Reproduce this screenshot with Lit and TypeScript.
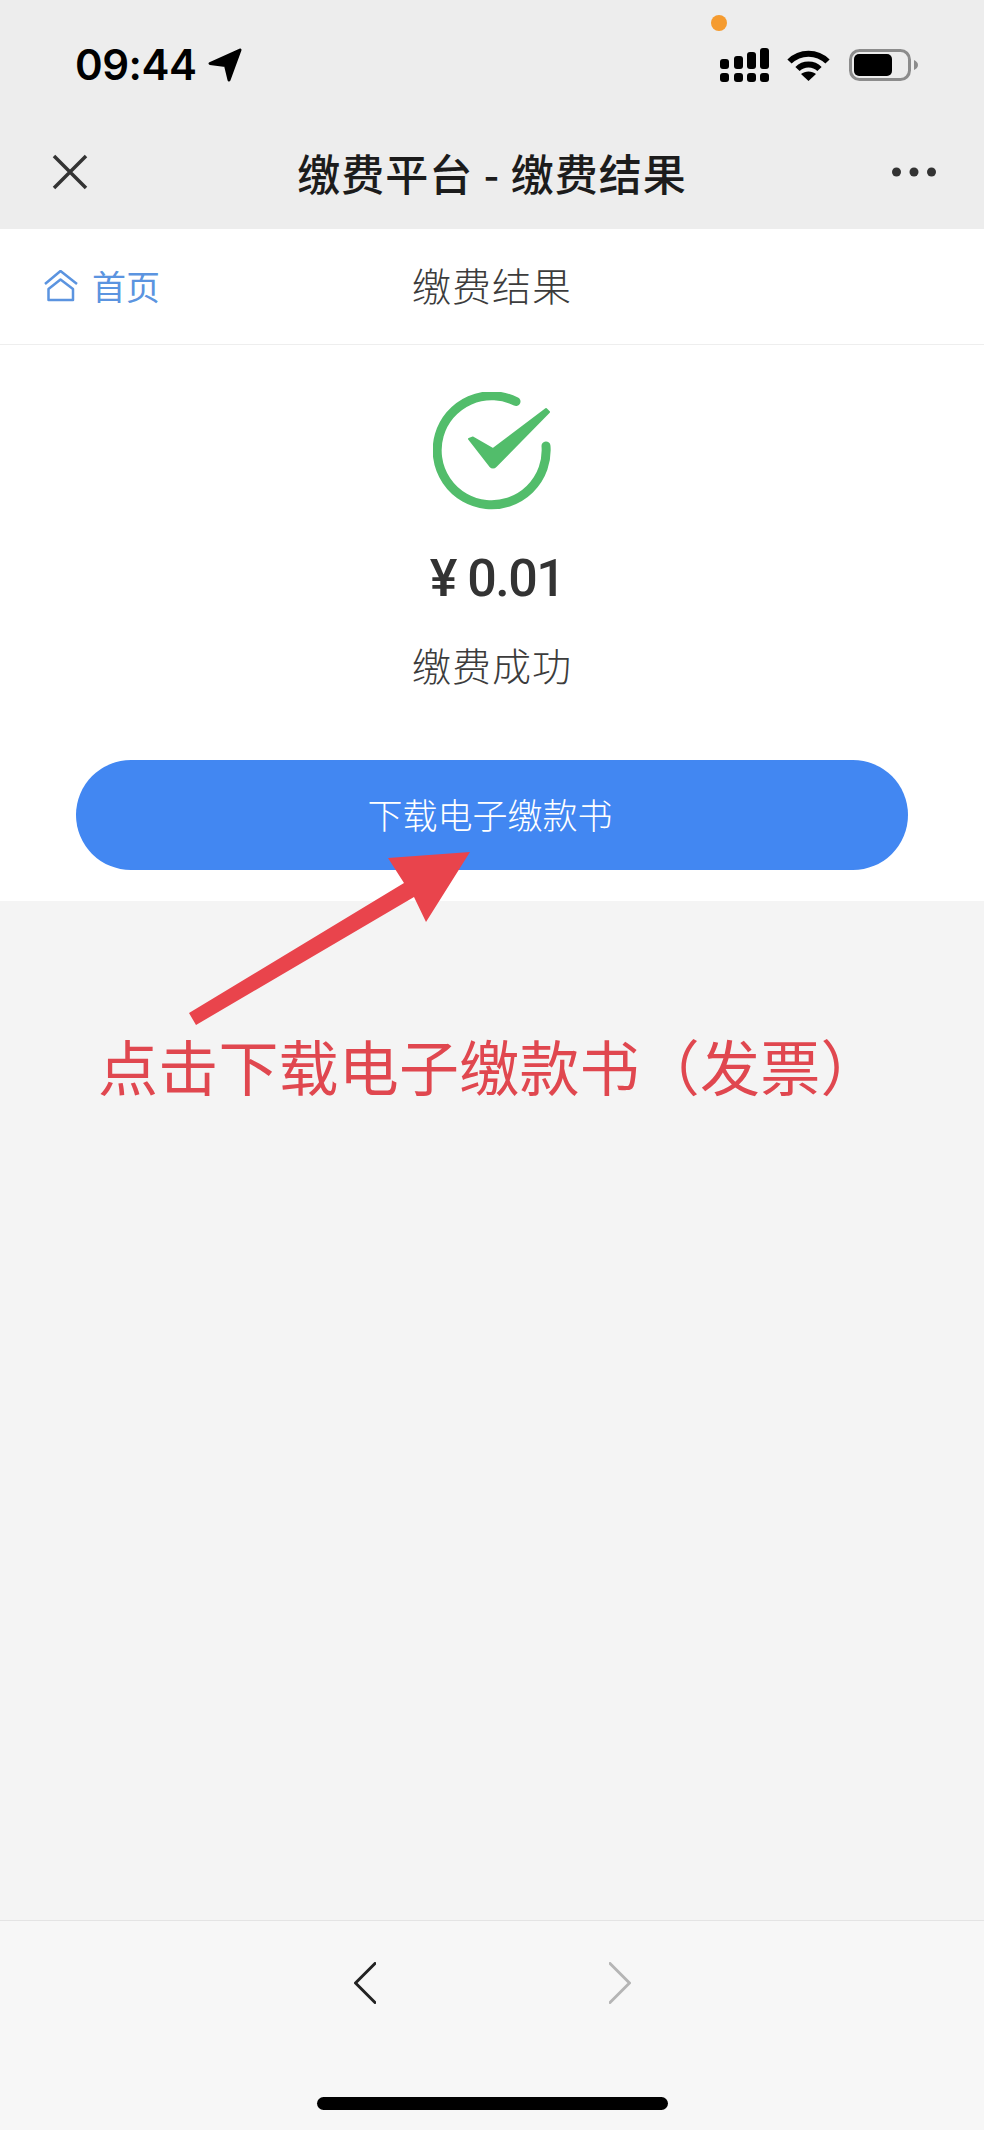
import { LitElement, html, css } from "lit";
import { customElement } from "lit/decorators.js";

@customElement("app-root")
export class AppRoot extends LitElement {
  static override styles = css`
    :host {
      display: block;
      font-family: "Noto Sans CJK SC", "Noto Sans", sans-serif;
    }

    svg {
      display: block;
      flex: none;
    }

    .page {
      position: relative;
      display: flex;
      flex-direction: column;
      height: 2130px;
      background: #f4f4f4;
      overflow: hidden;
    }

    /* Status bar + WeChat title bar */
    .top {
      background: #ededed;
    }

    .status {
      position: relative;
      display: flex;
      align-items: center;
      height: 115px;
      box-sizing: border-box;
      padding: 15px 66px 0 75px;
    }

    .time {
      font-family: Inter, "Liberation Sans", sans-serif;
      font-size: 42px;
      font-weight: 600;
      line-height: 50px;
      letter-spacing: -0.5px;
      color: #000;
    }

    .status-left {
      display: flex;
      align-items: center;
      gap: 12px;
    }

    .status-right {
      display: flex;
      align-items: center;
      margin-left: auto;
    }

    .wifi {
      margin-left: 18px;
    }

    .battery {
      margin-left: 19px;
    }

    .mic-dot {
      position: absolute;
      left: 711px;
      top: 15px;
      width: 16px;
      height: 16px;
      border-radius: 50%;
      background: #f59b2f;
    }

    .nav {
      display: grid;
      grid-template-columns: 1fr auto 1fr;
      align-items: center;
      height: 114px;
      padding: 0 48px;
    }

    .nav-close {
      margin-left: 3px;
    }

    .nav-title {
      font-size: 43px;
      font-weight: 500;
      line-height: 60px;
      letter-spacing: 1px;
      color: #1c1c1c;
      white-space: pre;
    }

    .nav-more {
      justify-self: end;
    }

    /* Page header */
    .head {
      display: grid;
      grid-template-columns: 1fr auto 1fr;
      align-items: center;
      height: 116px;
      box-sizing: border-box;
      padding: 0 44px;
      background: #fff;
      border-bottom: 1px solid #eee;
    }

    .home {
      display: flex;
      align-items: center;
      gap: 14px;
      margin-top: -2px;
      font-size: 34px;
      line-height: 48px;
      color: #5b94e0;
    }

    .head-title {
      margin-top: -6px;
      font-size: 39px;
      font-weight: 300;
      line-height: 54px;
      letter-spacing: 1px;
      color: #3c3c3c;
    }

    /* Result panel */
    .result {
      display: flex;
      flex-direction: column;
      align-items: center;
      padding: 47px 76px 31px;
      background: #fff;
    }

    .amount {
      margin-top: 35px;
      padding-left: 10px;
      font-family: Roboto, "Liberation Sans", sans-serif;
      font-size: 52px;
      font-weight: 500;
      line-height: 68px;
      letter-spacing: -1.5px;
      color: #333;
    }

    .label {
      margin-top: 26px;
      font-size: 39px;
      font-weight: 300;
      line-height: 50px;
      letter-spacing: 1px;
      color: #3c3c3c;
    }

    .btn {
      display: flex;
      align-items: center;
      justify-content: center;
      width: 100%;
      height: 110px;
      margin-top: 71px;
      padding: 0 4px 2px 0;
      box-sizing: border-box;
      border-radius: 55px;
      background: #4287f2;
      color: #fff;
      font-size: 35px;
      font-weight: 300;
      line-height: 48px;
    }

    /* Annotation painted on the screenshot */
    .body {
      flex: 1;
      padding: 129px 0 0 98px;
    }

    .note {
      font-size: 60px;
      line-height: 70px;
      letter-spacing: 0.2px;
      color: #e0474f;
      white-space: nowrap;
    }

    .arrow {
      position: absolute;
      left: 180px;
      top: 845px;
    }

    /* WeChat browser toolbar */
    .foot {
      display: flex;
      flex-direction: column;
      align-items: center;
      height: 210px;
      box-sizing: border-box;
      padding-top: 41px;
      background: #f7f7f7;
      border-top: 1px solid #e4e4e4;
    }

    .foot-nav {
      display: flex;
      gap: 233px;
    }

    .indicator {
      width: 351px;
      height: 13px;
      margin-top: 93px;
      border-radius: 7px;
      background: #000;
    }
  `;

  override render() {
    return html`
      <div class="page">
        <div class="top">
          <div class="status">
            <div class="status-left">
              <span class="time">09:44</span>
              <svg width="34" height="34" viewBox="0 0 34 34">
                <path
                  d="M32 2 2 15.500 17.500 17.500 21 32Z"
                  fill="#000"
                  stroke="#000"
                  stroke-width="3"
                  stroke-linejoin="round"
                />
              </svg>
            </div>
            <span class="mic-dot"></span>
            <div class="status-right">
              <svg width="49" height="34" viewBox="0 0 49 34">
                <rect x="0" y="25" width="9" height="9" rx="3" />
                <rect x="14" y="25" width="9" height="9" rx="3" />
                <rect x="27" y="25" width="9" height="9" rx="3" />
                <rect x="40" y="25" width="9" height="9" rx="3" />
                <rect x="0" y="11" width="9" height="10" rx="3" />
                <rect x="14" y="8" width="9" height="13" rx="3" />
                <rect x="27" y="4" width="9" height="17" rx="3" />
                <rect x="40" y="0" width="9" height="21" rx="3" />
              </svg>
              <svg class="wifi" width="43" height="32" viewBox="0 0 43 32">
                <path d="M2.500 12.500C13 2 30 2 40.500 12.500" fill="none" stroke="#000" stroke-width="6" />
                <path d="M10.500 20C16.500 14 26.500 14 32.500 20" fill="none" stroke="#000" stroke-width="6" />
                <path d="M14 25C18 21.500 25 21.500 29 25L21.500 32Z" fill="#000" />
              </svg>
              <svg class="battery" width="69" height="32" viewBox="0 0 69 32">
                <rect x="1.500" y="1.500" width="59" height="29" rx="9" fill="none" stroke="#8c8c8c" stroke-width="3" />
                <rect x="5" y="5" width="38" height="22" rx="5" fill="#000" />
                <path d="M65 11C67.500 12 69 14 69 16S67.500 20 65 21Z" fill="#8c8c8c" />
              </svg>
            </div>
          </div>
          <div class="nav">
            <svg class="nav-close" width="38" height="38" viewBox="0 0 38 38">
              <path d="M3 3 35 35M35 3 3 35" fill="none" stroke="#333" stroke-width="3.500" />
            </svg>
            <div class="nav-title">缴费平台 - 缴费结果</div>
            <svg class="nav-more" width="44" height="10" viewBox="0 0 44 10">
              <circle cx="4.500" cy="5" r="4.500" fill="#333" />
              <circle cx="22" cy="5" r="4.500" fill="#333" />
              <circle cx="39.500" cy="5" r="4.500" fill="#333" />
            </svg>
          </div>
        </div>

        <div class="head">
          <div class="home">
            <svg width="34" height="32" viewBox="0 0 34 32">
              <path
                d="M1 14 16.500 1 33 14M4.500 30V19L16.500 9.500 29 19V30Z"
                fill="none"
                stroke="#5b94e0"
                stroke-width="2.500"
                stroke-linejoin="round"
              />
            </svg>
            <span>首页</span>
          </div>
          <div class="head-title">缴费结果</div>
          <div></div>
        </div>

        <div class="result">
          <svg width="118" height="118" viewBox="0 0 118 118">
            <path
              d="M83 9.500A54.500 54.500 0 1 0 113 54"
              fill="none"
              stroke="#52bd6b"
              stroke-width="9"
              stroke-linecap="round"
            />
            <path
              d="M36 47 40 45.500 60 57 113 17 116 20 63 74Q60 77 57 74Z"
              fill="#52bd6b"
              stroke="#52bd6b"
              stroke-width="2"
              stroke-linejoin="round"
            />
          </svg>
          <div class="amount">¥ 0.01</div>
          <div class="label">缴费成功</div>
          <div class="btn">下载电子缴款书</div>
        </div>

        <div class="body">
          <div class="note">点击下载电子缴款书（发票）</div>
        </div>

        <svg class="arrow" width="300" height="190" viewBox="180 845 300 190">
          <path
            d="M189 1013 196 1025 414 897 426 922 470 852 388 858 404 883Z"
            fill="#e9444c"
          />
        </svg>

        <div class="foot">
          <div class="foot-nav">
            <svg width="22" height="42" viewBox="0 0 22 42">
              <path d="M21 1.500 1.500 21 21 40.500" fill="none" stroke="#222" stroke-width="3" stroke-linecap="round" stroke-linejoin="round" />
            </svg>
            <svg width="22" height="42" viewBox="0 0 22 42">
              <path d="M1 1.500 20.500 21 1 40.500" fill="none" stroke="#b5b5b5" stroke-width="3" stroke-linecap="round" stroke-linejoin="round" />
            </svg>
          </div>
          <div class="indicator"></div>
        </div>
      </div>
    `;
  }
}

declare global {
  interface HTMLElementTagNameMap {
    "app-root": AppRoot;
  }
}
